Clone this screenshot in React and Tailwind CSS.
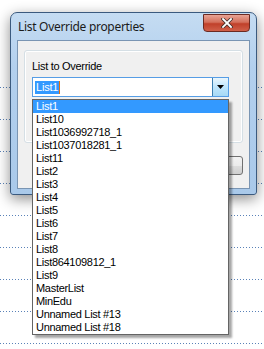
import React from "react"

const items = [
  "List1",
  "List10",
  "List1036992718_1",
  "List1037018281_1",
  "List11",
  "List2",
  "List3",
  "List4",
  "List5",
  "List6",
  "List7",
  "List8",
  "List864109812_1",
  "List9",
  "MasterList",
  "MinEdu",
  "Unnamed List #13",
  "Unnamed List #18",
]

const lines = [87, 119, 151, 183, 215, 247, 279, 311, 343]

export default function App() {
  return (
    <div className="relative w-[264px] h-[349px] bg-white overflow-hidden" style={{ fontFamily: "'Liberation Sans', Arial, sans-serif" }}>

      {/* dotted rows behind the dialog */}
      <div className="flex flex-col pt-[87px] gap-[31px]">
        {lines.map(y => (
          <div key={y} className="h-px w-full bg-[linear-gradient(to_right,#5a82b8_1px,transparent_1px)] bg-[length:3px_1px]" />
        ))}
      </div>

      {/* dialog window */}
      <div className="absolute left-[10px] top-[12px] w-[247px] h-[183px] rounded-t-[7px] rounded-b-[3px] border border-[#3b5a7e] bg-[linear-gradient(to_bottom,#c5dcf2,#b3d0ee_30%,#a9c9ea)] shadow-[0_4px_14px_rgba(0,0,0,0.45)] flex flex-col px-[6px] pb-[5px]">

        <div className="h-[27px] flex items-center justify-between relative">
          <span className="text-[12px] tracking-[-0.3px] text-[#1b1b1b] pl-px pt-[1px]" style={{ fontFamily: "'Noto Sans', 'Liberation Sans', sans-serif" }}>
            List Override properties
          </span>
          <div className="absolute right-0 top-[1px] w-[47px] h-[18px] rounded-b-[4px] border border-[#6b2a22] bg-[linear-gradient(to_bottom,#e8a394,#d4705c_45%,#c0402a_55%,#d0604a)] flex items-center justify-center">
            <svg width="12" height="10" viewBox="0 0 12 10">
              <path d="M2 1 L10 9 M10 1 L2 9" stroke="#44302c" strokeWidth="3.4" strokeLinecap="square" />
              <path d="M2 1 L10 9 M10 1 L2 9" stroke="#ffffff" strokeWidth="1.8" strokeLinecap="square" />
            </svg>
          </div>
        </div>

        <div className="flex-1 border border-[#7a95b3] bg-[#f0f0f0] px-[6px] pt-[9px] flex flex-col">

          <div className="h-[93px] rounded-[3px] border border-[#d5dfe5] shadow-[inset_0_0_0_1px_#ffffff] px-[7px] pt-[9px]">
            <div className="text-[11px] tracking-[-0.3px] text-black leading-[13px]">List to Override</div>
            <div className="mt-[4px] h-[20px] w-[197px] border border-[#569de5] bg-white flex items-center">
              <div className="flex-1 pl-[2px] flex items-center">
                <span className="bg-[#3399ff] text-white text-[11px] tracking-[-0.2px] leading-[13px] h-[13px] px-px">List1</span>
                <span className="w-px h-[13px] bg-[#e07010]" />
              </div>
              <div className="w-[16px] h-full border-l border-[#3c7fb1] bg-[linear-gradient(to_bottom,#eaf6fd,#bee6fd_50%,#a7d9f5)] flex items-center justify-center">
                <svg width="7" height="4" viewBox="0 0 7 4">
                  <path d="M0 0 H7 L3.5 4 Z" fill="#000" />
                </svg>
              </div>
            </div>
          </div>

          <div className="mt-[13px] self-end w-[90px] h-[19px] rounded-[3px] border border-[#707070] bg-[linear-gradient(to_bottom,#f2f2f2,#ebebeb_50%,#dddddd_50%,#cfcfcf)]" />
        </div>
      </div>

      {/* open dropdown list */}
      <div className="absolute left-[32px] top-[99px] w-[197px] border border-[#646464] bg-white shadow-[3px_3px_2px_rgba(0,0,0,0.35)]">
        {items.map((item, i) => (
          <div
            key={item}
            className={
              i === 0
                ? "h-[13px] leading-[13px] pl-[3px] text-[11px] tracking-[-0.3px] bg-[#3399ff] text-white"
                : "h-[13px] leading-[13px] pl-[3px] text-[11px] tracking-[-0.3px] text-black"
            }
          >
            {item}
          </div>
        ))}
      </div>

    </div>
  )
}
